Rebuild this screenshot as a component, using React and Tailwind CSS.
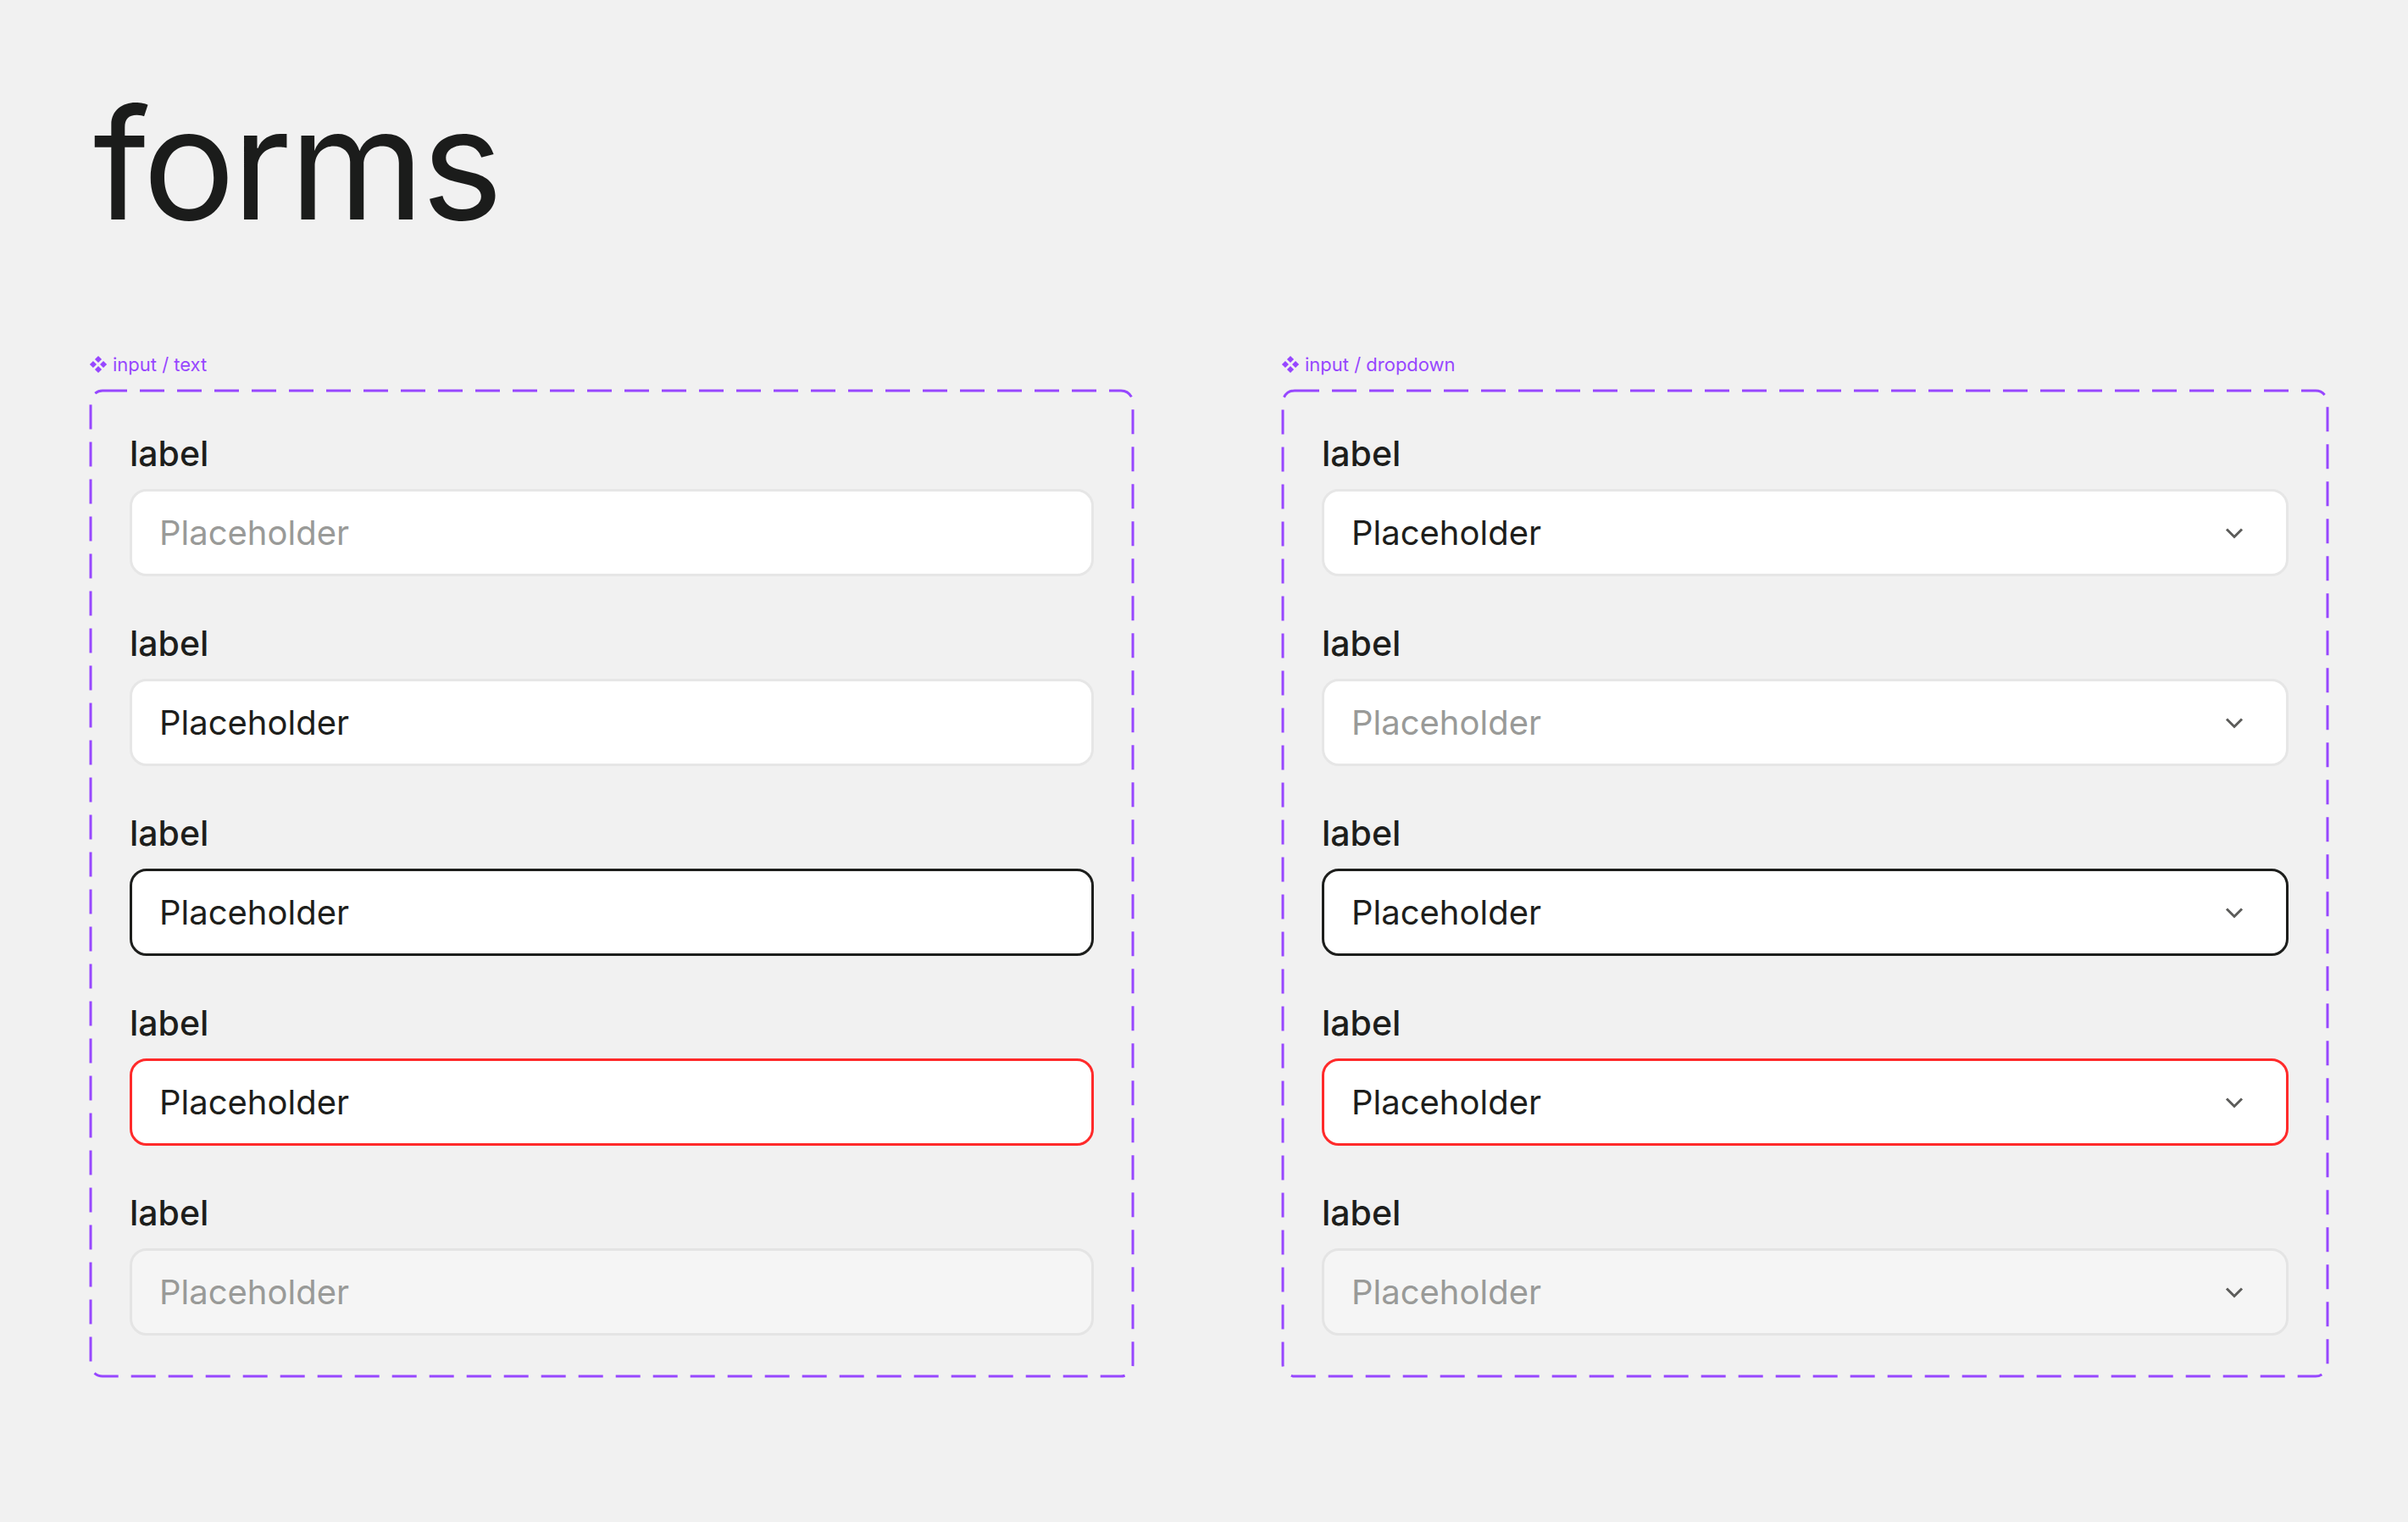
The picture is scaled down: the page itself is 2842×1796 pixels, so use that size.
import React from "react";

const states = {
  empty: "bg-white border-[#e6e6e6] text-[#999a98]",
  filled: "bg-white border-[#e6e6e6] text-[#1d1e1c]",
  focus: "bg-white border-[#1d1e1c] text-[#1d1e1c]",
  error: "bg-white border-[#ff2a2a] text-[#1d1e1c]",
  disabled: "bg-[#f5f5f5] border-[#e4e4e4] text-[#999a98]",
};

const textFields = ["empty", "filled", "focus", "error", "disabled"];
const dropdownFields = ["filled", "empty", "focus", "error", "disabled"];

const ComponentIcon = () => (
  <svg width="22" height="22" viewBox="0 0 20 20" fill="#9747ff">
    <path d="M10 0.8 L13.7 4.5 L10 8.2 L6.3 4.5 Z" />
    <path d="M4.5 6.3 L8.2 10 L4.5 13.7 L0.8 10 Z" />
    <path d="M15.5 6.3 L19.2 10 L15.5 13.7 L11.8 10 Z" />
    <path d="M10 11.8 L13.7 15.5 L10 19.2 L6.3 15.5 Z" />
  </svg>
);

const Chevron = () => (
  <svg width="24" height="14" viewBox="0 0 24 14" fill="none">
    <polyline points="3,2.5 12,11.5 21,2.5" stroke="#5c5c5a" strokeWidth="3" />
  </svg>
);

const Field = ({ state, dropdown }) => (
  <div className="flex flex-col gap-[18px]">
    <div className="text-[41px] leading-[48px] font-medium text-[#1d1e1c]">label</div>
    <div
      className={`h-[103px] rounded-[20px] border-[3px] flex items-center justify-between pl-[32px] pr-[49px] text-[40px] ${states[state]}`}
    >
      <span>Placeholder</span>
      {dropdown && <Chevron />}
    </div>
  </div>
);

const Frame = ({ name, fields, dropdown, width }) => (
  <div className={`${width} flex flex-col gap-[17px]`}>
    <div className="h-[28px] flex items-center gap-[6px] -ml-[2px] text-[22px] text-[#9747ff]">
      <ComponentIcon />
      <span>{name}</span>
    </div>
    <div className="relative flex flex-col gap-[55px] px-[46px] pt-[50px] pb-[48px]">
      <svg className="absolute inset-0 w-full h-full overflow-visible pointer-events-none">
        <rect
          x="0"
          y="0"
          width="100%"
          height="100%"
          rx="14"
          fill="none"
          stroke="#9747ff"
          strokeWidth="3"
          strokeDasharray="29 15"
        />
      </svg>
      {fields.map((s, i) => (
        <Field key={i} state={s} dropdown={dropdown} />
      ))}
    </div>
  </div>
);

export default function App() {
  return (
    <div className="min-h-screen bg-[#f1f1f1] font-[Inter,sans-serif] pl-[107px] pt-[101px]">
      <h1 className="text-[182px] leading-[184px] font-normal text-[#1b1c1b] tracking-[-0.02em] ml-[3px]">forms</h1>
      <div className="mt-[131px] flex gap-[177px]">
        <Frame name="input / text" fields={textFields} width="w-[1230px]" />
        <Frame name="input / dropdown" fields={dropdownFields} width="w-[1233px]" dropdown />
      </div>
    </div>
  );
}
